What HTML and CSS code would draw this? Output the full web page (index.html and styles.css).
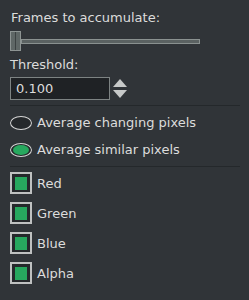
FILE: index.html
```html
<!DOCTYPE html>
<html lang="en">
<head>
  <meta charset="UTF-8">
  <title>Accumulate options</title>
  <link rel="stylesheet" href="styles.css">
</head>
<body>
  <div class="panel">
    <div class="section">
      <div class="label frames-label">Frames to accumulate:</div>
      <div class="slider">
        <div class="handle"></div>
        <div class="track"></div>
      </div>
      <div class="label threshold-label">Threshold:</div>
      <div class="spin-row">
        <div class="entry">0.100</div>
        <div class="spinner">
          <span class="arrow up"></span>
          <span class="arrow down"></span>
        </div>
      </div>
    </div>

    <div class="sep"></div>

    <div class="section radios">
      <div class="radio"><span class="dot"></span>Average changing pixels</div>
      <div class="radio checked"><span class="dot"></span>Average similar pixels</div>
    </div>

    <div class="sep"></div>

    <div class="section checks">
      <div class="check"><span class="box"></span>Red</div>
      <div class="check"><span class="box"></span>Green</div>
      <div class="check"><span class="box"></span>Blue</div>
      <div class="check"><span class="box"></span>Alpha</div>
    </div>
  </div>
</body>
</html>
```

FILE: styles.css
```css
body {
  margin: 0;
  background-color: #303438;
  color: #dcdcdc;
  font-family: "DejaVu Sans", sans-serif;
  font-size: 13px;
  line-height: 15px;
}

.panel {
  width: 230px;
  padding: 10px 0 0 10px;
  display: flex;
  flex-direction: column;
}

.section {
  display: flex;
  flex-direction: column;
}

.frames-label {
  margin-left: 1px;
}

.slider {
  display: flex;
  align-items: center;
  width: 190px;
  height: 20px;
  margin-top: 6px;
}

.handle {
  width: 9px;
  height: 18px;
  background-color: #5f6766;
  border: 1px solid #8d9493;
  position: relative;
}

/* split line of the handle */
.handle:after {
  content: "";
  position: absolute;
  top: 0;
  bottom: 0;
  left: 4px;
  width: 1px;
  background-color: #3c4242;
}

.track {
  flex: 1;
  height: 3px;
  background-color: #5b6262;
  border: 1px solid #8a9190;
}

.threshold-label {
  margin-top: 6px;
}

.spin-row {
  display: flex;
  align-items: center;
  gap: 2px;
  margin-top: 5px;
}

.entry {
  width: 93px;
  height: 21px;
  line-height: 21px;
  padding-left: 5px;
  background-color: #1f2225;
  border: 1px solid #7d8383;
}

.spinner {
  width: 15px;
  height: 19px;
  display: flex;
  flex-direction: column;
  justify-content: space-between;
  align-items: center;
}

.arrow {
  width: 0;
  height: 0;
  border-left: 7px solid transparent;
  border-right: 7px solid transparent;
}

.arrow.up { border-bottom: 8px solid #c7c9c9; }
.arrow.down { border-top: 8px solid #c7c9c9; }

.sep {
  height: 1px;
  background-color: #24282b;
  margin-top: 5px;
}

.radios {
  padding-top: 9px;
  gap: 12px;
}

.radio {
  display: flex;
  align-items: center;
  gap: 5px;
}

.radio .dot {
  box-sizing: border-box;
  width: 22px;
  height: 14px;
  border-radius: 50%;
  border: 1px solid #d6d6d6;
  background-color: #25282b;
  position: relative;
}

.radio.checked .dot:after {
  content: "";
  position: absolute;
  top: 1px;
  left: 2px;
  right: 2px;
  bottom: 1px;
  border-radius: 50%;
  background-color: #27a85e;
}

.radios + .sep {
  margin-top: 9px;
}

.checks {
  padding-top: 5px;
  gap: 8px;
}

.check {
  display: flex;
  align-items: center;
  gap: 5px;
}

.check .box {
  box-sizing: border-box;
  width: 22px;
  height: 22px;
  border: 2px solid #bfc1c1;
  background-color: #25282b;
  display: flex;
  align-items: center;
  justify-content: center;
}

.check .box:after {
  content: "";
  width: 12px;
  height: 13px;
  background-color: #27a85e;
}
```
